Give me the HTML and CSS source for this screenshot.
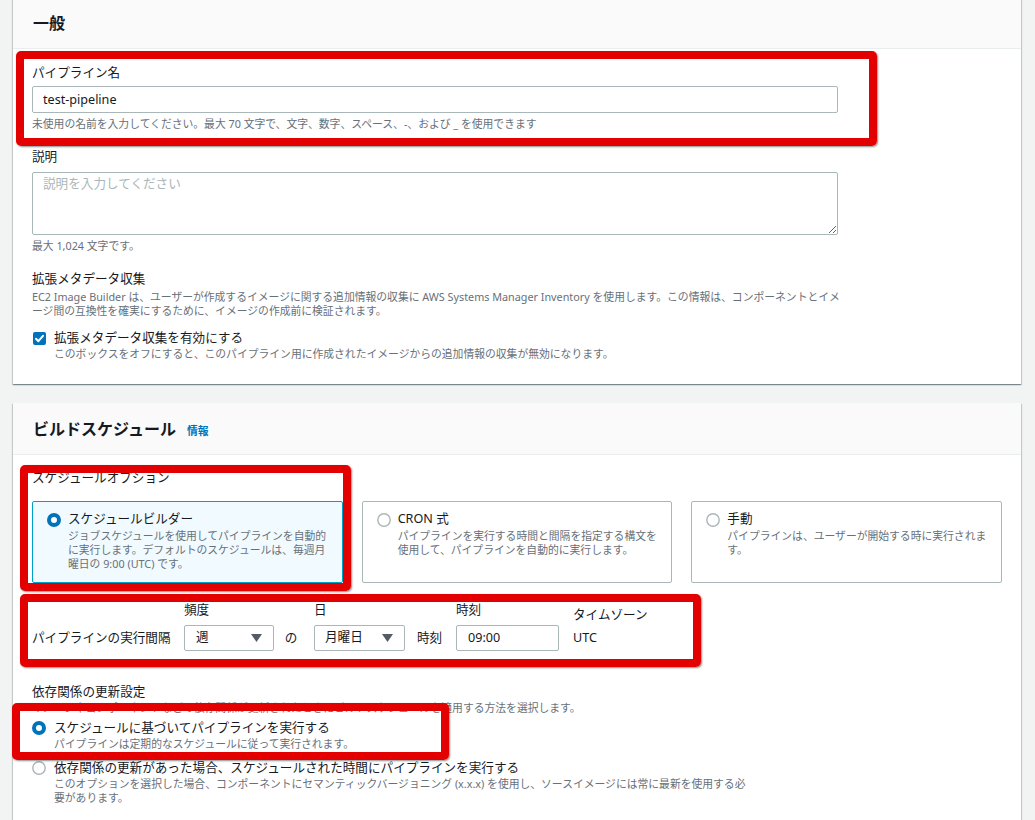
FILE: index.html
```html
<!DOCTYPE html>
<html lang="ja">
<head>
<meta charset="utf-8">
<title>パイプライン</title>
<link rel="stylesheet" href="styles.css">
</head>
<body>
<div class="page">
  <section class="card card-first">
    <div class="card-header"><h2>一般</h2></div>
    <div class="card-body body-general">
      <div class="field">
        <div class="label">パイプライン名</div>
        <input class="text-input name-input" type="text" value="test-pipeline">
        <div class="hint">未使用の名前を入力してください。最大 70 文字で、文字、数字、スペース、-、および _ を使用できます</div>
      </div>
      <div class="field field-gap">
        <div class="label">説明</div>
        <textarea class="textarea" placeholder="説明を入力してください"></textarea>
        <div class="hint">最大 1,024 文字です。</div>
      </div>
      <div class="field field-gap">
        <div class="label">拡張メタデータ収集</div>
        <div class="desc">EC2 Image Builder は、ユーザーが作成するイメージに関する追加情報の収集に AWS Systems Manager Inventory を使用します。この情報は、コンポーネントとイメ<br>ージ間の互換性を確実にするために、イメージの作成前に検証されます。</div>
        <div class="check-row">
          <span class="checkbox"><svg viewBox="0 0 13 13" width="13" height="13"><rect x="0" y="0" width="13" height="13" rx="2" fill="#0073bb"/><path d="M3 6.8 L5.4 9.2 L10 3.8" fill="none" stroke="#fff" stroke-width="2" stroke-linecap="round" stroke-linejoin="round"/></svg></span>
          <div class="check-text">
            <div class="check-title">拡張メタデータ収集を有効にする</div>
            <div class="sub">このボックスをオフにすると、このパイプライン用に作成されたイメージからの追加情報の収集が無効になります。</div>
          </div>
        </div>
      </div>
    </div>
  </section>

  <section class="card">
    <div class="card-header"><h2>ビルドスケジュール</h2><span class="info">情報</span></div>
    <div class="card-body body-schedule">
      <div class="label">スケジュールオプション</div>
      <div class="tiles">
        <div class="tile tile-selected">
          <span class="radio"><svg viewBox="0 0 14 14" width="14" height="14"><circle cx="7" cy="7" r="5" fill="#fff" stroke="#0073bb" stroke-width="4"/></svg></span>
          <div class="tile-text">
            <div class="tile-title">スケジュールビルダー</div>
            <div class="sub">ジョブスケジュールを使用してパイプラインを自動的に実行します。デフォルトのスケジュールは、毎週月曜日の 9:00 (UTC) です。</div>
          </div>
        </div>
        <div class="tile">
          <span class="radio"><svg viewBox="0 0 14 14" width="14" height="14"><circle cx="7" cy="7" r="6.2" fill="#fff" stroke="#aab7b8" stroke-width="1.4"/></svg></span>
          <div class="tile-text">
            <div class="tile-title">CRON 式</div>
            <div class="sub">パイプラインを実行する時間と間隔を指定する構文を使用して、パイプラインを自動的に実行します。</div>
          </div>
        </div>
        <div class="tile">
          <span class="radio"><svg viewBox="0 0 14 14" width="14" height="14"><circle cx="7" cy="7" r="6.2" fill="#fff" stroke="#aab7b8" stroke-width="1.4"/></svg></span>
          <div class="tile-text">
            <div class="tile-title">手動</div>
            <div class="sub">パイプラインは、ユーザーが開始する時に実行されます。</div>
          </div>
        </div>
      </div>

      <div class="interval">
        <div class="inline-text interval-label">パイプラインの実行間隔</div>
        <div class="col">
          <div class="small-label">頻度</div>
          <div class="select sel-freq"><span class="sel-value">週</span><svg viewBox="0 0 11 8" width="11" height="8"><path d="M0 0 H11 L5.5 8 Z" fill="#545b64"/></svg></div>
        </div>
        <div class="inline-text of">の</div>
        <div class="col">
          <div class="small-label">日</div>
          <div class="select sel-day"><span class="sel-value">月曜日</span><svg viewBox="0 0 11 8" width="11" height="8"><path d="M0 0 H11 L5.5 8 Z" fill="#545b64"/></svg></div>
        </div>
        <div class="inline-text time-word">時刻</div>
        <div class="col">
          <div class="small-label">時刻</div>
          <div class="time-input">09:00</div>
        </div>
        <div class="col tz">
          <div class="tz-label">タイムゾーン</div>
          <div class="inline-text">UTC</div>
        </div>
      </div>

      <div class="deps">
        <div class="dep-label">依存関係の更新設定</div>
        <div class="sub">イメージやコンポーネントなどの依存関係が更新されたときにビルドスケジュールを適用する方法を選択します。</div>
        <div class="radio-list">
          <div class="radio-item">
            <span class="radio"><svg viewBox="0 0 14 14" width="14" height="14"><circle cx="7" cy="7" r="5" fill="#fff" stroke="#0073bb" stroke-width="4"/></svg></span>
            <div>
              <div class="check-title">スケジュールに基づいてパイプラインを実行する</div>
              <div class="sub">パイプラインは定期的なスケジュールに従って実行されます。</div>
            </div>
          </div>
          <div class="radio-item">
            <span class="radio"><svg viewBox="0 0 14 14" width="14" height="14"><circle cx="7" cy="7" r="6.2" fill="#fff" stroke="#aab7b8" stroke-width="1.4"/></svg></span>
            <div>
              <div class="check-title">依存関係の更新があった場合、スケジュールされた時間にパイプラインを実行する</div>
              <div class="sub">このオプションを選択した場合、コンポーネントにセマンティックバージョニング (x.x.x) を使用し、ソースイメージには常に最新を使用する必<br>要があります。</div>
            </div>
          </div>
        </div>
      </div>
    </div>
  </section>
</div>

<div class="mark mark-1"></div>
<div class="mark mark-2"></div>
<div class="mark mark-3"></div>
<div class="mark mark-4"></div>
</body>
</html>
```

FILE: styles.css
```css
html, body {
  margin: 0;
  padding: 0;
}
body {
  background: #f2f3f3;
  font-family: "Noto Sans", "Noto Sans CJK JP", sans-serif;
  color: #16191f;
  position: relative;
  height: 820px;
  overflow: hidden;
}
.page {
  padding: 0 14px 0 13px;
  margin-top: -3px;
}
.card {
  background: #fff;
  box-shadow: 0 1px 1px 0 rgba(0, 28, 36, .3), 1px 1px 1px 0 rgba(0, 28, 36, .15), -1px 1px 1px 0 rgba(0, 28, 36, .15);
}
.card + .card {
  margin-top: 19px;
}
.card-header {
  background: #fafafa;
  border-bottom: 1px solid #eaeded;
  padding: 15px 19px 14px 20px;
  display: flex;
  align-items: baseline;
  gap: 11px;
}
.card-header h2 {
  margin: 0;
  font-size: 16px;
  line-height: 22px;
  font-weight: 700;
}
.info {
  font-size: 10.8px;
  font-weight: 700;
  color: #0073bb;
}
.card-body {
  padding: 14px 19px 23px;
}
.body-schedule {
  padding-top: 13px;
  padding-bottom: 40px;
}
.label {
  font-size: 12.6px;
  line-height: 20px;
}
.hint, .desc, .sub {
  font-size: 10.8px;
  line-height: 14px;
  color: #687078;
}
.hint {
  margin-top: 4px;
}
.field-gap {
  margin-top: 16px;
}
.text-input {
  display: block;
  box-sizing: border-box;
  width: 806px;
  height: 27px;
  margin: 3px 0 0;
  padding: 0 10px;
  border: 1px solid #aab7b8;
  border-radius: 2px;
  font-family: inherit;
  font-size: 12.6px;
  color: #16191f;
  background: #fff;
  outline: none;
}
.textarea {
  display: block;
  box-sizing: border-box;
  width: 806px;
  height: 63px;
  margin: 5px 0 0;
  padding: 2px 10px;
  border: 1px solid #aab7b8;
  border-radius: 2px;
  font-family: inherit;
  font-size: 12.6px;
  line-height: 18px;
  resize: vertical;
  outline: none;
}
.textarea::placeholder {
  color: #aab7b8;
}
.desc {
  margin-top: 1px;
  white-space: nowrap;
}
.check-row {
  display: flex;
  align-items: flex-start;
  gap: 8px;
  margin-top: 11px;
}
.checkbox {
  display: block;
  width: 13px;
  height: 13px;
  margin: 3px 0 0 1px;
}
.checkbox svg, .radio svg {
  display: block;
}
.check-title {
  font-size: 12.6px;
  line-height: 18px;
}
.tiles {
  display: grid;
  grid-template-columns: repeat(3, 1fr);
  gap: 19px;
  margin-top: 13px;
}
.tile {
  box-sizing: border-box;
  height: 82px;
  border: 1px solid #aab7b8;
  border-radius: 2px;
  padding: 7px 12px 0 14px;
  display: flex;
  align-items: flex-start;
  gap: 7px;
}
.tile-selected {
  border-color: #00a1c9;
  background: #f1faff;
}
.radio {
  display: block;
  width: 14px;
  height: 14px;
  flex: none;
}
.tile .radio {
  margin-top: 4px;
}
.tile-title {
  font-size: 12.6px;
  line-height: 20px;
}
.interval {
  display: flex;
  align-items: flex-end;
  margin-top: 18px;
}
.col {
  display: flex;
  flex-direction: column;
}
.small-label {
  font-size: 12.6px;
  line-height: 18px;
  margin-bottom: 6px;
}
.inline-text {
  font-size: 12.6px;
  line-height: 26px;
  height: 26px;
}
.interval-label {
  width: 152px;
}
.of {
  width: 40px;
  text-align: center;
  box-sizing: border-box;
  padding-right: 6px;
}
.select {
  box-sizing: border-box;
  height: 26px;
  border: 1px solid #aab7b8;
  border-radius: 2px;
  display: flex;
  align-items: center;
  justify-content: space-between;
  padding: 0 11px 0 11px;
  font-size: 12.6px;
}
.sel-value {
  display: block;
  line-height: 20px;
  margin-top: -3px;
}
.sel-freq {
  width: 90px;
}
.sel-day {
  width: 91px;
}
.sel-day .sel-value {
  margin-left: -1px;
}
.time-word {
  width: 51px;
  text-align: center;
  box-sizing: border-box;
  padding-right: 2px;
}
.time-input {
  box-sizing: border-box;
  width: 103px;
  height: 26px;
  border: 1px solid #aab7b8;
  border-radius: 2px;
  padding: 0 11px;
  font-size: 12.6px;
  line-height: 24px;
}
.tz {
  margin-left: 14px;
}
.tz-label {
  font-size: 12.6px;
  line-height: 20px;
}
.deps {
  margin-top: 32px;
}
.dep-label {
  font-size: 12.6px;
  line-height: 18px;
}
.radio-list {
  margin-top: 4px;
}
.radio-item {
  display: flex;
  align-items: flex-start;
  gap: 8px;
}
.radio-item + .radio-item {
  margin-top: 8px;
}
.radio-item .radio {
  margin-top: 2px;
}
.mark {
  position: absolute;
  box-sizing: border-box;
  border: 8px solid #e30000;
  border-radius: 5px;
  box-shadow: 1px 1px 2px rgba(0, 0, 0, .45);
}
.mark-1 {
  left: 16px;
  top: 51px;
  width: 861px;
  height: 95px;
}
.mark-2 {
  left: 20px;
  top: 465px;
  width: 331px;
  height: 126px;
}
.mark-3 {
  left: 20px;
  top: 594px;
  width: 681px;
  height: 73px;
}
.mark-4 {
  left: 12px;
  top: 703px;
  width: 437px;
  height: 57px;
}
```
